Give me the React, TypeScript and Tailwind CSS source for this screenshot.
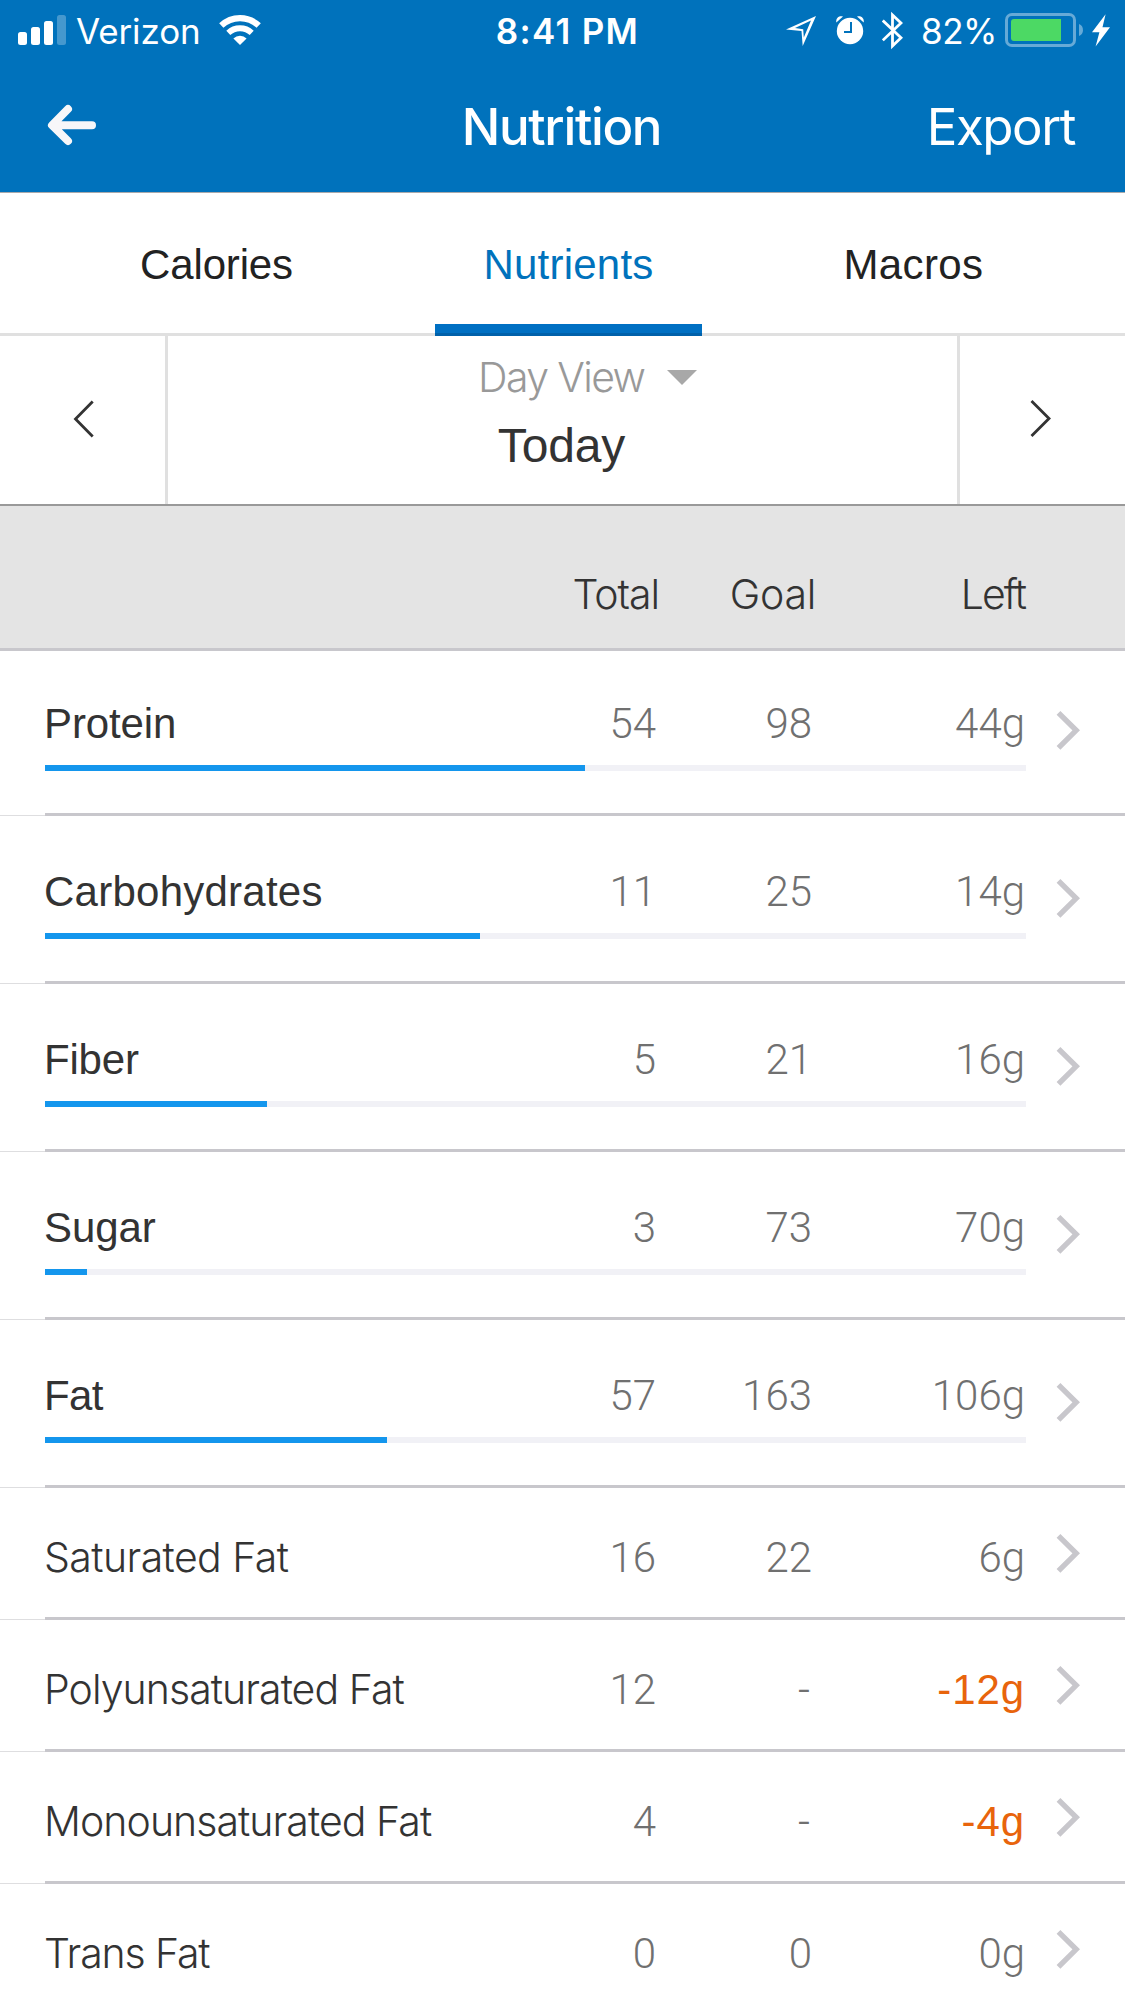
import React from "react";

type Row = {
  name: string;
  total: string;
  goal: string;
  left: string;
  fill?: number;
  over?: boolean;
  tracking: string;
};

const TRACK = 981;

const rows: Row[] = [
  { name: "Protein", total: "54", goal: "98", left: "44g", fill: 540, tracking: "tracking-[-0.12px]" },
  { name: "Carbohydrates", total: "11", goal: "25", left: "14g", fill: 435, tracking: "tracking-[0.25px]" },
  { name: "Fiber", total: "5", goal: "21", left: "16g", fill: 222, tracking: "tracking-[-0.2px]" },
  { name: "Sugar", total: "3", goal: "73", left: "70g", fill: 42, tracking: "tracking-[-0.1px]" },
  { name: "Fat", total: "57", goal: "163", left: "106g", fill: 342, tracking: "tracking-[-0.6px]" },
  { name: "Saturated Fat", total: "16", goal: "22", left: "6g", tracking: "tracking-[-0.58px]" },
  { name: "Polyunsaturated Fat", total: "12", goal: "-", left: "-12g", over: true, tracking: "tracking-[-0.94px]" },
  { name: "Monounsaturated Fat", total: "4", goal: "-", left: "-4g", over: true, tracking: "tracking-[-0.94px]" },
  { name: "Trans Fat", total: "0", goal: "0", left: "0g", tracking: "tracking-[-1.15px]" },
];

function StatusBar() {
  return (
    <div className="grid h-[60px] grid-cols-[375px_375px_375px] text-[35px] leading-[42px]">
      <div className="flex pl-[18px]">
        <svg className="h-[60px] w-[48px]" viewBox="18 0 48 60" fill="#fff">
          <rect x="18" y="32" width="9" height="13" rx="2.5" />
          <rect x="31" y="27" width="9" height="18" rx="2.5" />
          <rect x="44" y="21" width="9" height="24" rx="2.5" />
          <rect x="57" y="15" width="9" height="30" rx="2.5" opacity="0.27" />
        </svg>
        <span className="mt-[10px] ml-[10px] w-[143px] tracking-[-0.13px]">Verizon</span>
        <svg className="h-[60px] w-[42px]" viewBox="219 0 42 60" fill="none" stroke="#fff">
          <path d="M221.3 25.6A27.2 27.2 0 0 1 258.7 25.6" strokeWidth="6.2" />
          <path d="M228.3 32.9A17 17 0 0 1 251.7 32.9" strokeWidth="5.8" />
          <path d="M240 45L233.4 38.4A9.6 9.6 0 0 1 246.6 38.4Z" fill="#fff" stroke="none" />
        </svg>
      </div>
      <div className="pt-[10px] pl-[10px] text-center font-semibold tracking-[1.29px]">8:41 PM</div>
      <div className="flex justify-end pr-[15px]">
        <svg className="h-[60px] w-[31px]" viewBox="786 0 31 60" fill="#fff" fillRule="evenodd">
          <path d="M816 16L786 29.6L801.5 31L802.7 46ZM811 20.5L803.8 37.5L803.2 29.2L795 28Z" />
        </svg>
        <svg className="ml-[19px] h-[60px] w-[28px]" viewBox="836 0 28 60">
          <circle cx="850" cy="31" r="13.2" fill="#fff" />
          <path d="M836.3 22.5C835.6 18 839 15 843 16.6Z" fill="#fff" />
          <path d="M863.7 22.5C864.4 18 861 15 857 16.6Z" fill="#fff" />
          <path d="M851 22V32H844" fill="none" stroke="#0072bc" strokeWidth="2" />
        </svg>
        <svg className="ml-[18px] h-[60px] w-[21px]" viewBox="882 0 21 60" fill="none" stroke="#fff" strokeWidth="2.8">
          <path d="M882.8 20.5L901 37.8L892.5 46V15L901 23L882.8 40.3" strokeMiterlimit="3" />
        </svg>
        <span className="mt-[10px] ml-[18px] w-[84px] tracking-[-0.5px]">82%</span>
        <svg className="h-[60px] w-[79px]" viewBox="1005 0 79 60">
          <rect x="1006.5" y="14.5" width="68" height="31" rx="5.5" fill="none" stroke="#66aad7" strokeWidth="3" />
          <path d="M1014 19H1061V41H1014A3 3 0 0 1 1011 38V22A3 3 0 0 1 1014 19Z" fill="#4cd964" />
          <path d="M1079 24C1084.3 25.5 1084.3 34.5 1079 36Z" fill="#66aad7" />
        </svg>
        <svg className="ml-[8px] h-[60px] w-[18px]" viewBox="1092 0 18 60" fill="#fff">
          <path d="M1105.6 14.3L1092 32.2H1099.4L1095.6 46.5L1110 27.3H1102.5Z" />
        </svg>
      </div>
    </div>
  );
}

function TitleBar() {
  return (
    <div className="grid h-[132px] grid-cols-3 text-[51px] leading-[60px]">
      <svg className="ml-[45px] h-[132px] w-[54px]" viewBox="45 60 54 132" fill="none" stroke="#f7f7f9" strokeWidth="8" strokeLinecap="round" strokeLinejoin="round">
        <path d="M68 109L52 125.2L68 141M53 125.2H92" />
      </svg>
      <h1 className="pt-[37px] pr-[2px] text-center font-[550] tracking-[-1.35px]">Nutrition</h1>
      <span className="pt-[37px] pr-[50px] text-right tracking-[-1.46px]">Export</span>
    </div>
  );
}

function Tabs() {
  return (
    <nav className="flex h-[144px] border-t border-[#a9a9ab] text-center font-['Liberation_Sans',sans-serif] text-[42px] leading-[48px] text-[#222]">
      <div className="w-[435px] border-b-[3px] border-[#e0e0e0] pt-[48px] pr-[2px] tracking-[-0.15px]">Calories</div>
      <div className="flex w-[267px] flex-col justify-between pt-[48px] text-[#0072bc] tracking-[0.24px]">
        <span>Nutrients</span>
        <div className="h-[12px] border-b-[3px] border-[#0061aa] bg-[#0070c3]" />
      </div>
      <div className="w-[423px] border-b-[3px] border-[#e0e0e0] pt-[48px] tracking-[0.38px]">Macros</div>
    </nav>
  );
}

function DateNav() {
  return (
    <div className="flex h-[170px] border-b-2 border-[#999]">
      <div className="w-[168px] border-r-[3px] border-[#e0e0e0]">
        <svg className="h-[168px] w-[165px]" viewBox="0 336 165 168" fill="none" stroke="#333" strokeWidth="2.8">
          <path d="M92.7 401.5L75.5 419L92.7 436.5" />
        </svg>
      </div>
      <div className="flex w-[789px] flex-col items-center pt-[17px]">
        <div className="flex items-center pl-[50px] text-[41px] leading-[48px] font-light text-[#999]">
          <span className="w-[189px] tracking-[-1.61px] whitespace-nowrap">Day View</span>
          <svg className="h-[15px] w-[30px]" viewBox="0 0 30 15" fill="#a8a8a8">
            <path d="M0 0H30L15 15Z" />
          </svg>
        </div>
        <div className="mt-[18px] pr-[2px] font-['Liberation_Sans',sans-serif] text-[48px] leading-[54px] tracking-[-0.12px] text-[#333]">Today</div>
      </div>
      <div className="w-[168px] border-l-[3px] border-[#e0e0e0]">
        <svg className="h-[168px] w-[165px]" viewBox="960 336 165 168" fill="none" stroke="#333" strokeWidth="2.8">
          <path d="M1031.5 401L1049 418.5L1031.5 436" />
        </svg>
      </div>
    </div>
  );
}

function ColumnHeader() {
  return (
    <div className="relative z-10 -mb-[3px] grid h-[145px] grid-cols-[614px_157px_209px] border-b-[3px] border-[#c8c7cc] bg-[#e4e4e4] pt-[64px] pl-[45px] text-right text-[41px] leading-[48px] font-light text-[#333]">
      <span className="tracking-[-1.05px]">Total</span>
      <span className="tracking-[-0.24px]">Goal</span>
      <span className="tracking-[-2.03px]">Left</span>
    </div>
  );
}

function NutrientRow({ row }: { row: Row }) {
  const major = row.fill !== undefined;
  return (
    <li className={major ? "flex h-[168px] flex-col" : "flex h-[132px] flex-col"}>
      <div className="flex flex-1 pl-[45px]">
        <div className={major ? "w-[981px] pt-[52px]" : "w-[981px] pt-[45px]"}>
          <div className="grid grid-cols-[611px_156px_213px] items-baseline text-right font-['Roboto',sans-serif] text-[42px] leading-[48px] font-light text-[#707070]">
            <div className="flex items-baseline justify-between">
              <span
                className={
                  (major
                    ? "-ml-px font-['Liberation_Sans',sans-serif] text-[42px] font-normal text-[#333] "
                    : "-ml-px font-['Inter',sans-serif] text-[41px] font-light text-[#333] ") + row.tracking
                }
              >
                {row.name}
              </span>
              <span>{row.total}</span>
            </div>
            <span className={row.goal === "-" ? "pr-[2px]" : ""}>{row.goal}</span>
            <span className={row.over ? "font-['Liberation_Sans',sans-serif] font-normal tracking-[0.9px] text-[#e8640c]" : ""}>
              {row.left}
            </span>
          </div>
          {major && (
            <div className="mt-[17px] h-[6px] bg-[#f1f1f6]">
              <div className="h-full bg-[#1496ed]" style={{ width: `${(row.fill! / TRACK) * 100}%` }} />
            </div>
          )}
        </div>
        <svg
          className={major ? "mt-[62px] ml-[29px] h-[40px] w-[25px]" : "mt-[45px] ml-[29px] h-[40px] w-[25px]"}
          viewBox="0 0 25 40"
          fill="none"
          stroke="#c8c7cc"
          strokeWidth="5.4"
        >
          <path d="M3.5 2.8L21.2 20.3L3.5 37.8" />
        </svg>
      </div>
      <div className="flex h-[3px] items-end">
        <div className="h-px w-[45px] bg-[#dedee0]" />
        <div className="h-[3px] flex-1 bg-[#c8c7cc]" />
      </div>
    </li>
  );
}

export default function App() {
  return (
    <main className="h-[2001px] w-[1125px] overflow-hidden bg-white font-['Inter',sans-serif]">
      <header className="bg-[#0072bc] text-white">
        <StatusBar />
        <TitleBar />
      </header>
      <Tabs />
      <DateNav />
      <ColumnHeader />
      <ul>
        {rows.map((row) => (
          <NutrientRow key={row.name} row={row} />
        ))}
      </ul>
    </main>
  );
}
